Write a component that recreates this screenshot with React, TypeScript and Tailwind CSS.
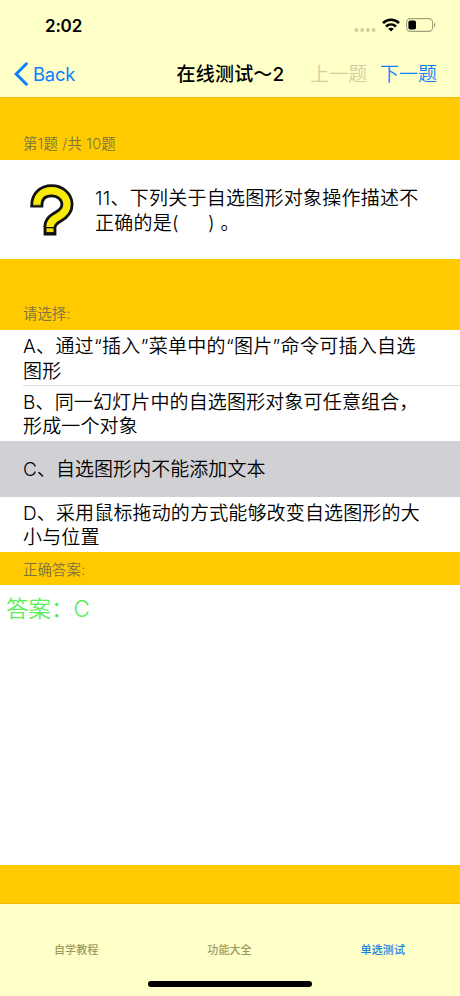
import React, { useState } from "react";
import { clsx } from "clsx";

type Option = {
  id: string;
  lines: string[];
};

const options: Option[] = [
  { id: "A", lines: ["A、通过“插入”菜单中的“图片”命令可插入自选", "图形"] },
  { id: "B", lines: ["B、同一幻灯片中的自选图形对象可任意组合，", "形成一个对象"] },
  { id: "C", lines: ["C、自选图形内不能添加文本"] },
  { id: "D", lines: ["D、采用鼠标拖动的方式能够改变自选图形的大", "小与位置"] },
];

const tabs = ["自学教程", "功能大全", "单选测试"];

function StatusBar() {
  return (
    <div className="flex h-[50px] items-center pl-[45px] pr-6">
      <span className="pt-px text-[17px] font-semibold leading-5 tracking-[-0.2px]">2:02</span>
      <div className="ml-auto flex items-center">
        <svg width="22" height="6" viewBox="0 0 22 6" className="mt-[9px]" fill="#cfcf9f">
          <circle cx="2.5" cy="3" r="2" />
          <circle cx="8.2" cy="3" r="2" />
          <circle cx="13.9" cy="3" r="2" />
          <circle cx="19.6" cy="3" r="2" />
        </svg>
        <svg width="18" height="14" viewBox="0 0 18 14" className="ml-[6px]" fill="none" stroke="#000">
          <path d="M1 5.1C5.5.6 12.5.6 17 5.1" strokeWidth="2.7" />
          <path d="M4 8.5c2.9-2.7 7.1-2.7 10 0" strokeWidth="2.5" />
          <path d="M9 13.6 6.2 10.8c1.6-1.4 4-1.4 5.6 0Z" fill="#000" stroke="none" />
        </svg>
        <svg width="30" height="14" viewBox="0 0 30 14" className="ml-[6px]" fill="none">
          <rect x=".6" y=".6" width="26" height="12.8" rx="3.8" stroke="#a3a37f" strokeWidth="1.1" />
          <rect x="2.4" y="2.4" width="7.6" height="9.2" rx="1.8" fill="#000" />
          <path d="M28 4.8c1.9.6 1.9 3.8 0 4.4Z" fill="#a3a37f" />
        </svg>
      </div>
    </div>
  );
}

function NavBar() {
  return (
    <div className="flex h-[47px] items-center pl-[14px] pr-[23px] text-[19px] leading-6">
      <button type="button" className="flex w-[163px] items-center text-[#0a7fff]">
        <svg width="14" height="24" viewBox="0 0 14 24" fill="none" stroke="currentColor">
          <path d="M12.4 1.8 2.2 12l10.2 10.2" strokeWidth="3" strokeLinecap="round" />
        </svg>
        <span className="ml-[5px] text-[18.4px] font-[370] tracking-[-0.2px]">Back</span>
      </button>
      <h1 className="w-[134px] whitespace-nowrap pt-[2px] font-medium tracking-[0.2px]">在线测试～2</h1>
      <button type="button" disabled className="w-[70px] pt-[2px] text-left font-[350] text-[#cfcfa2]">
        上一题
      </button>
      <button type="button" className="whitespace-nowrap pt-[2px] font-[350] text-[#0a7fff]">
        下一题
      </button>
    </div>
  );
}

function QuestionMark() {
  const hook = "M6.8 21.500C6.800 12 13 6.800 21.500 6.800S37 12.500 37 20.500c0 6.500-4 9.500-8.500 12S20 37.500 20 43";
  return (
    <svg width="44" height="52" viewBox="0 0 44 52" fill="none" className="shrink-0">
      <path d={hook} stroke="#111" strokeWidth="13" />
      <path d="M.4 21h12.900v2.500H.4ZM13.600 42h12.800v9.500H13.600Z" fill="#111" />
      <path d={hook} stroke="#f7ea08" strokeWidth="7.4" />
      <path d="M3.100 20.800h7.400v.700H3.100Z" fill="#111" />
      <path d="M16.500 44.300h7v3.800h-7Z" fill="#f0dc08" />
    </svg>
  );
}

export default function App() {
  const [selected, setSelected] = useState("C");
  const [activeTab, setActiveTab] = useState("单选测试");

  return (
    <div className="flex h-[996px] w-[460px] flex-col overflow-hidden bg-[#ffcb00] font-['Inter','Noto_Sans_CJK_SC',sans-serif] text-black">
      <header className="h-[98px] shrink-0 border-b border-[#eabd08] bg-[#ffffc8]">
        <StatusBar />
        <NavBar />
      </header>

      <div className="flex h-[62px] shrink-0 items-end px-[23px] pb-[6px] text-[14.4px] font-[350] leading-5 tracking-[0.2px] text-[#7d7240]">
        第1题 /共 10题
      </div>

      <section className="flex h-[99px] shrink-0 items-center bg-white pl-[30px]">
        <QuestionMark />
        <p className="ml-[21px] whitespace-pre pt-[2px] text-[19px] font-[350] leading-[25px] tracking-[0.25px]">
          11、下列关于自选图形对象操作描述不
          {"\n"}正确的是(<span className="tracking-[0.5px]">&nbsp;&nbsp;&nbsp;&nbsp;&nbsp;</span>) 。
        </p>
      </section>

      <div className="flex h-[71px] shrink-0 items-end px-[23px] pb-[6px] text-[14.4px] font-[350] leading-5 text-[#7d7240]">
        请选择:
      </div>

      <ul className="shrink-0 bg-white">
        {options.map((option) => (
          <li
            key={option.id}
            onClick={() => setSelected(option.id)}
            className={clsx(
              "flex h-[55.5px] flex-col pl-[23px]",
              selected === option.id && "bg-[#d1d0d5]"
            )}
          >
            <div
              className={clsx(
                "flex flex-1 flex-col justify-center",
                option.id === "A" && "pt-[5px] tracking-[0.3px]",
                option.id === "C" && "pt-[3px] tracking-[0.05px]",
                (option.id === "B" || option.id === "D") && "pt-[4px] tracking-[0.15px]"
              )}
            >
              {option.lines.map((line) => (
                <span key={line} className="whitespace-nowrap text-[19px] font-[350] leading-[24.5px]">
                  {line}
                </span>
              ))}
            </div>
            {option.id === "A" && <div className="h-px shrink-0 bg-[#dededf]" />}
          </li>
        ))}
      </ul>

      <div className="flex h-[33px] shrink-0 items-center px-[23px] pt-[2px] text-[14.4px] font-[350] leading-5 tracking-[0.15px] text-[#7d7240]">
        正确答案:
      </div>

      <div className="h-[280px] shrink-0 bg-white px-[6px] pt-[8px] text-[22.5px] font-[350] leading-8 text-[#58ee58]">
        答案：C
      </div>

      <footer className="mt-auto flex h-[93px] shrink-0 flex-col border-t border-[#eabd08] bg-[#ffffc8]">
        <nav className="grid h-[76px] grid-cols-3 pt-[38px] text-[11px] font-medium leading-4 tracking-[0.1px]">
          {tabs.map((tab) => (
            <button
              key={tab}
              type="button"
              onClick={() => setActiveTab(tab)}
              className={clsx("h-4 pr-px", activeTab === tab ? "text-[#1681e8]" : "text-[#9b9b60]")}
            >
              {tab}
            </button>
          ))}
        </nav>
        <div className="mx-auto mt-px h-[6px] w-[164px] rounded-full bg-black" />
      </footer>
    </div>
  );
}
